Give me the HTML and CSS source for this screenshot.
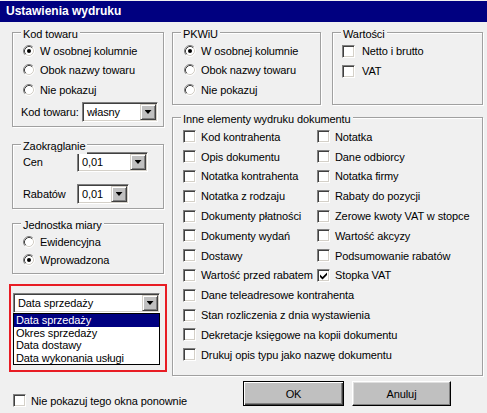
FILE: index.html
```html
<!DOCTYPE html>
<html lang="pl">
<head>
<meta charset="utf-8">
<title>Ustawienia wydruku</title>
<link rel="stylesheet" href="styles.css">
</head>
<body>
<div class="window">
  <div class="titlebar">Ustawienia wydruku</div>
  <div class="main">
    <div class="col-left">
      <div class="group g-kod">
        <span class="legend">Kod towaru</span>
        <div class="opt"><svg class="rd" viewBox="0 0 12 12"><circle cx="6" cy="6" r="5" fill="#fff"/><path d="M2.11 9.89A5.5 5.5 0 0 1 9.89 2.11" fill="none" stroke="#808080"/><path d="M9.89 2.11A5.5 5.5 0 0 1 2.11 9.89" fill="none" stroke="#fff"/><path d="M2.82 9.18A4.5 4.5 0 0 1 9.18 2.82" fill="none" stroke="#404040"/><path d="M9.18 2.82A4.5 4.5 0 0 1 2.82 9.18" fill="none" stroke="#d4d0c8"/><circle cx="6" cy="6" r="2" fill="#000"/></svg><span>W osobnej kolumnie</span></div>
        <div class="opt"><svg class="rd" viewBox="0 0 12 12"><circle cx="6" cy="6" r="5" fill="#fff"/><path d="M2.11 9.89A5.5 5.5 0 0 1 9.89 2.11" fill="none" stroke="#808080"/><path d="M9.89 2.11A5.5 5.5 0 0 1 2.11 9.89" fill="none" stroke="#fff"/><path d="M2.82 9.18A4.5 4.5 0 0 1 9.18 2.82" fill="none" stroke="#404040"/><path d="M9.18 2.82A4.5 4.5 0 0 1 2.82 9.18" fill="none" stroke="#d4d0c8"/></svg><span>Obok nazwy towaru</span></div>
        <div class="opt"><svg class="rd" viewBox="0 0 12 12"><circle cx="6" cy="6" r="5" fill="#fff"/><path d="M2.11 9.89A5.5 5.5 0 0 1 9.89 2.11" fill="none" stroke="#808080"/><path d="M9.89 2.11A5.5 5.5 0 0 1 2.11 9.89" fill="none" stroke="#fff"/><path d="M2.82 9.18A4.5 4.5 0 0 1 9.18 2.82" fill="none" stroke="#404040"/><path d="M9.18 2.82A4.5 4.5 0 0 1 2.82 9.18" fill="none" stroke="#d4d0c8"/></svg><span>Nie pokazuj</span></div>
        <div class="field f-kod">
          <span class="flabel">Kod towaru:</span>
          <div class="select s-kod"><span class="val">własny</span><span class="arrow"></span></div>
        </div>
      </div>

      <div class="group g-zaok">
        <span class="legend">Zaokrąglanie</span>
        <div class="field f-cen">
          <span class="flabel w54">Cen</span>
          <div class="select s-cen"><span class="val">0,01</span><span class="arrow"></span></div>
        </div>
        <div class="field f-rab">
          <span class="flabel w54">Rabatów</span>
          <div class="select s-rab"><span class="val">0,01</span><span class="arrow"></span></div>
        </div>
      </div>

      <div class="group g-jm">
        <span class="legend">Jednostka miary</span>
        <div class="opt o18"><svg class="rd" viewBox="0 0 12 12"><circle cx="6" cy="6" r="5" fill="#fff"/><path d="M2.11 9.89A5.5 5.5 0 0 1 9.89 2.11" fill="none" stroke="#808080"/><path d="M9.89 2.11A5.5 5.5 0 0 1 2.11 9.89" fill="none" stroke="#fff"/><path d="M2.82 9.18A4.5 4.5 0 0 1 9.18 2.82" fill="none" stroke="#404040"/><path d="M9.18 2.82A4.5 4.5 0 0 1 2.82 9.18" fill="none" stroke="#d4d0c8"/></svg><span>Ewidencyjna</span></div>
        <div class="opt o18"><svg class="rd" viewBox="0 0 12 12"><circle cx="6" cy="6" r="5" fill="#fff"/><path d="M2.11 9.89A5.5 5.5 0 0 1 9.89 2.11" fill="none" stroke="#808080"/><path d="M9.89 2.11A5.5 5.5 0 0 1 2.11 9.89" fill="none" stroke="#fff"/><path d="M2.82 9.18A4.5 4.5 0 0 1 9.18 2.82" fill="none" stroke="#404040"/><path d="M9.18 2.82A4.5 4.5 0 0 1 2.82 9.18" fill="none" stroke="#d4d0c8"/><circle cx="6" cy="6" r="2" fill="#000"/></svg><span>Wprowadzona</span></div>
      </div>

      <div class="hl">
        <div class="select s-combo"><span class="val">Data sprzedaży</span><span class="arrow"></span></div>
        <ul class="list">
          <li class="sel">Data sprzedaży</li>
          <li>Okres sprzedaży</li>
          <li>Data dostawy</li>
          <li>Data wykonania usługi</li>
        </ul>
      </div>

      <div class="footer">
        <span class="cb"></span><span class="nowrap">Nie pokazuj tego okna ponownie</span>
      </div>
    </div>

    <div class="col-right">
      <div class="row-top">
        <div class="group g-pkwiu">
          <span class="legend">PKWiU</span>
          <div class="opt"><svg class="rd" viewBox="0 0 12 12"><circle cx="6" cy="6" r="5" fill="#fff"/><path d="M2.11 9.89A5.5 5.5 0 0 1 9.89 2.11" fill="none" stroke="#808080"/><path d="M9.89 2.11A5.5 5.5 0 0 1 2.11 9.89" fill="none" stroke="#fff"/><path d="M2.82 9.18A4.5 4.5 0 0 1 9.18 2.82" fill="none" stroke="#404040"/><path d="M9.18 2.82A4.5 4.5 0 0 1 2.82 9.18" fill="none" stroke="#d4d0c8"/><circle cx="6" cy="6" r="2" fill="#000"/></svg><span>W osobnej kolumnie</span></div>
          <div class="opt"><svg class="rd" viewBox="0 0 12 12"><circle cx="6" cy="6" r="5" fill="#fff"/><path d="M2.11 9.89A5.5 5.5 0 0 1 9.89 2.11" fill="none" stroke="#808080"/><path d="M9.89 2.11A5.5 5.5 0 0 1 2.11 9.89" fill="none" stroke="#fff"/><path d="M2.82 9.18A4.5 4.5 0 0 1 9.18 2.82" fill="none" stroke="#404040"/><path d="M9.18 2.82A4.5 4.5 0 0 1 2.82 9.18" fill="none" stroke="#d4d0c8"/></svg><span>Obok nazwy towaru</span></div>
          <div class="opt"><svg class="rd" viewBox="0 0 12 12"><circle cx="6" cy="6" r="5" fill="#fff"/><path d="M2.11 9.89A5.5 5.5 0 0 1 9.89 2.11" fill="none" stroke="#808080"/><path d="M9.89 2.11A5.5 5.5 0 0 1 2.11 9.89" fill="none" stroke="#fff"/><path d="M2.82 9.18A4.5 4.5 0 0 1 9.18 2.82" fill="none" stroke="#404040"/><path d="M9.18 2.82A4.5 4.5 0 0 1 2.82 9.18" fill="none" stroke="#d4d0c8"/></svg><span>Nie pokazuj</span></div>
        </div>
        <div class="group g-wart">
          <span class="legend">Wartości</span>
          <div class="chk wide"><span class="cb"></span><span>Netto i brutto</span></div>
          <div class="chk wide"><span class="cb"></span><span>VAT</span></div>
        </div>
      </div>

      <div class="group g-inne">
        <span class="legend">Inne elementy wydruku dokumentu</span>
        <div class="grid">
          <div class="chk"><span class="cb"></span><span>Kod kontrahenta</span></div>
          <div class="chk"><span class="cb"></span><span>Notatka</span></div>
          <div class="chk"><span class="cb"></span><span>Opis dokumentu</span></div>
          <div class="chk"><span class="cb"></span><span>Dane odbiorcy</span></div>
          <div class="chk"><span class="cb"></span><span>Notatka kontrahenta</span></div>
          <div class="chk"><span class="cb"></span><span>Notatka firmy</span></div>
          <div class="chk"><span class="cb"></span><span>Notatka z rodzaju</span></div>
          <div class="chk"><span class="cb"></span><span>Rabaty do pozycji</span></div>
          <div class="chk"><span class="cb"></span><span>Dokumenty płatności</span></div>
          <div class="chk"><span class="cb"></span><span>Zerowe kwoty VAT w stopce</span></div>
          <div class="chk"><span class="cb"></span><span>Dokumenty wydań</span></div>
          <div class="chk"><span class="cb"></span><span>Wartość akcyzy</span></div>
          <div class="chk"><span class="cb"></span><span>Dostawy</span></div>
          <div class="chk"><span class="cb"></span><span>Podsumowanie rabatów</span></div>
          <div class="chk"><span class="cb"></span><span>Wartość przed rabatem</span></div>
          <div class="chk"><span class="cb"><svg class="tick" viewBox="0 0 9 9"><polygon points="1,3.5 3.5,6 8,1.5 8,4 3.5,8.5 1,6" fill="#000"/></svg></span><span>Stopka VAT</span></div>
          <div class="chk full"><span class="cb"></span><span>Dane teleadresowe kontrahenta</span></div>
          <div class="chk full"><span class="cb"></span><span>Stan rozliczenia z dnia wystawienia</span></div>
          <div class="chk full"><span class="cb"></span><span>Dekretacje księgowe na kopii dokumentu</span></div>
          <div class="chk full"><span class="cb"></span><span>Drukuj opis typu jako nazwę dokumentu</span></div>
        </div>
      </div>

      <div class="buttons">
        <div class="btn btn-default b-ok">OK</div>
        <div class="btn b-cancel">Anuluj</div>
      </div>
    </div>
  </div>
</div>
</body>
</html>
```

FILE: styles.css
```css
* { box-sizing: border-box; }
html, body { margin: 0; padding: 0; }
body {
  width: 487px;
  height: 413px;
  overflow: hidden;
  background: #f0f0f0;
  color: #000;
  font-family: "Liberation Sans", Arial, sans-serif;
  font-size: 11px;
  letter-spacing: -0.1px;
}
.window { width: 487px; height: 413px; padding-top: 1px; }
.titlebar {
  height: 21px;
  background: #000080;
  color: #fff;
  font-weight: bold;
  font-size: 12px;
  letter-spacing: 0;
  line-height: 21px;
  padding-left: 6px;
}
.main { display: flex; gap: 8px; padding-left: 12px; }
.col-left { width: 152px; display: flex; flex-direction: column; flex: none; }
.col-right { width: 311px; display: flex; flex-direction: column; flex: none; }

.group {
  position: relative;
  border: 1px solid #a0a0a0;
  box-shadow: inset 1px 1px 0 #fff, 1px 1px 0 #fff;
}
.legend {
  position: absolute;
  top: -6px;
  left: 8px;
  padding: 0 2px;
  line-height: 15px;
  background: #f0f0f0;
  white-space: nowrap;
}

.opt { display: flex; align-items: center; height: 19.5px; white-space: nowrap; }
.opt.o18 { height: 18px; }
.rd { width: 12px; height: 12px; flex: none; margin-right: 5px; display: block; }

.chk { display: flex; align-items: center; height: 19.8px; white-space: nowrap; }
.chk .cb { margin-right: 5px; }
.chk.wide { height: 20px; }
.chk.wide .cb { margin-right: 7px; }
.full { grid-column: 1 / -1; }

.cb {
  width: 13px;
  height: 13px;
  flex: none;
  background: #fff;
  border: 1px solid;
  border-color: #808080 #fff #fff #808080;
  box-shadow: inset 1px 1px 0 #404040, inset -1px -1px 0 #d4d0c8;
  padding: 1px;
  display: block;
}
.tick { width: 9px; height: 9px; display: block; }

.field { display: flex; align-items: center; white-space: nowrap; }
.flabel { flex: none; }
.w54 { width: 54px; }

.select {
  display: flex;
  align-items: center;
  height: 20px;
  background: #fff;
  border: 1px solid;
  border-color: #808080 #fff #fff #808080;
  box-shadow: inset 1px 1px 0 #404040, inset -1px -1px 0 #d4d0c8;
  padding: 1px;
  flex: none;
}
.select .val { flex: 1; padding-left: 3px; white-space: nowrap; overflow: hidden; }
.arrow {
  width: 16px;
  height: 16px;
  flex: none;
  background: #c0c0c0;
  border: 1px solid;
  border-color: #d4d0c8 #404040 #404040 #d4d0c8;
  box-shadow: inset 1px 1px 0 #fff, inset -1px -1px 0 #808080;
  display: flex;
  align-items: center;
  justify-content: center;
}
.arrow::after {
  content: "";
  width: 7px;
  height: 4px;
  background: #000;
  clip-path: polygon(0 0, 100% 0, 50% 100%);
}

/* Kod towaru */
.g-kod { margin-top: 10px; height: 95px; padding: 8px 0 0 10px; }
.f-kod { margin-top: 2.5px; margin-left: -2px; }
.f-kod .flabel { width: 61px; }
.s-kod { width: 76px; }

/* Zaokraglanie */
.g-zaok { margin-top: 17px; height: 65px; padding: 7px 0 0 10px; }
.f-rab { margin-top: 12px; }
.s-cen { width: 71px; }
.s-rab { width: 52px; }

/* Jednostka */
.g-jm { margin-top: 14px; height: 51px; padding: 9px 0 0 10px; }

/* highlight box with combo */
.hl {
  margin: 10px -3px 0 -3px;
  height: 88px;
  border: 2px solid #e81c24;
  padding: 7px 0 0 2px;
}
.s-combo { width: 147px; }
.list {
  list-style: none;
  margin: 0;
  padding: 0;
  width: 147px;
  background: #fff;
  border: 1px solid #000;
}
.list li { height: 12.5px; line-height: 12.5px; padding-left: 2px; white-space: nowrap; }
.list li.sel { background: #000080; color: #fff; }

.footer { display: flex; align-items: center; height: 13px; margin-top: 22px; margin-left: 1px; }
.footer .cb { margin-right: 5px; }
.nowrap { white-space: nowrap; }

/* right column */
.row-top { display: flex; gap: 11px; margin-top: 10px; }
.g-pkwiu { width: 149px; height: 73px; padding: 8px 0 0 11px; }
.g-wart { width: 151px; height: 73px; padding: 8px 0 0 9px; }

.g-inne { margin-top: 12px; height: 259px; padding: 9px 0 0 10px; }
.grid { display: grid; grid-template-columns: 134px 1fr; grid-auto-rows: 19.8px; }

.buttons { display: flex; gap: 8px; margin-top: 5px; padding-left: 71px; }
.btn {
  height: 25px;
  background: #c0c0c0;
  border: 1px solid;
  border-color: #fff #000 #000 #fff;
  box-shadow: inset -1px -1px 0 #808080, inset 1px 1px 0 #dfdfdf;
  display: flex;
  align-items: center;
  justify-content: center;
}
.btn-default {
  border-color: #000;
  box-shadow: inset 1px 1px 0 #fff, inset -1px -1px 0 #404040, inset -2px -2px 0 #808080;
}
.b-ok { width: 101px; }
.b-cancel { width: 99px; }
```
